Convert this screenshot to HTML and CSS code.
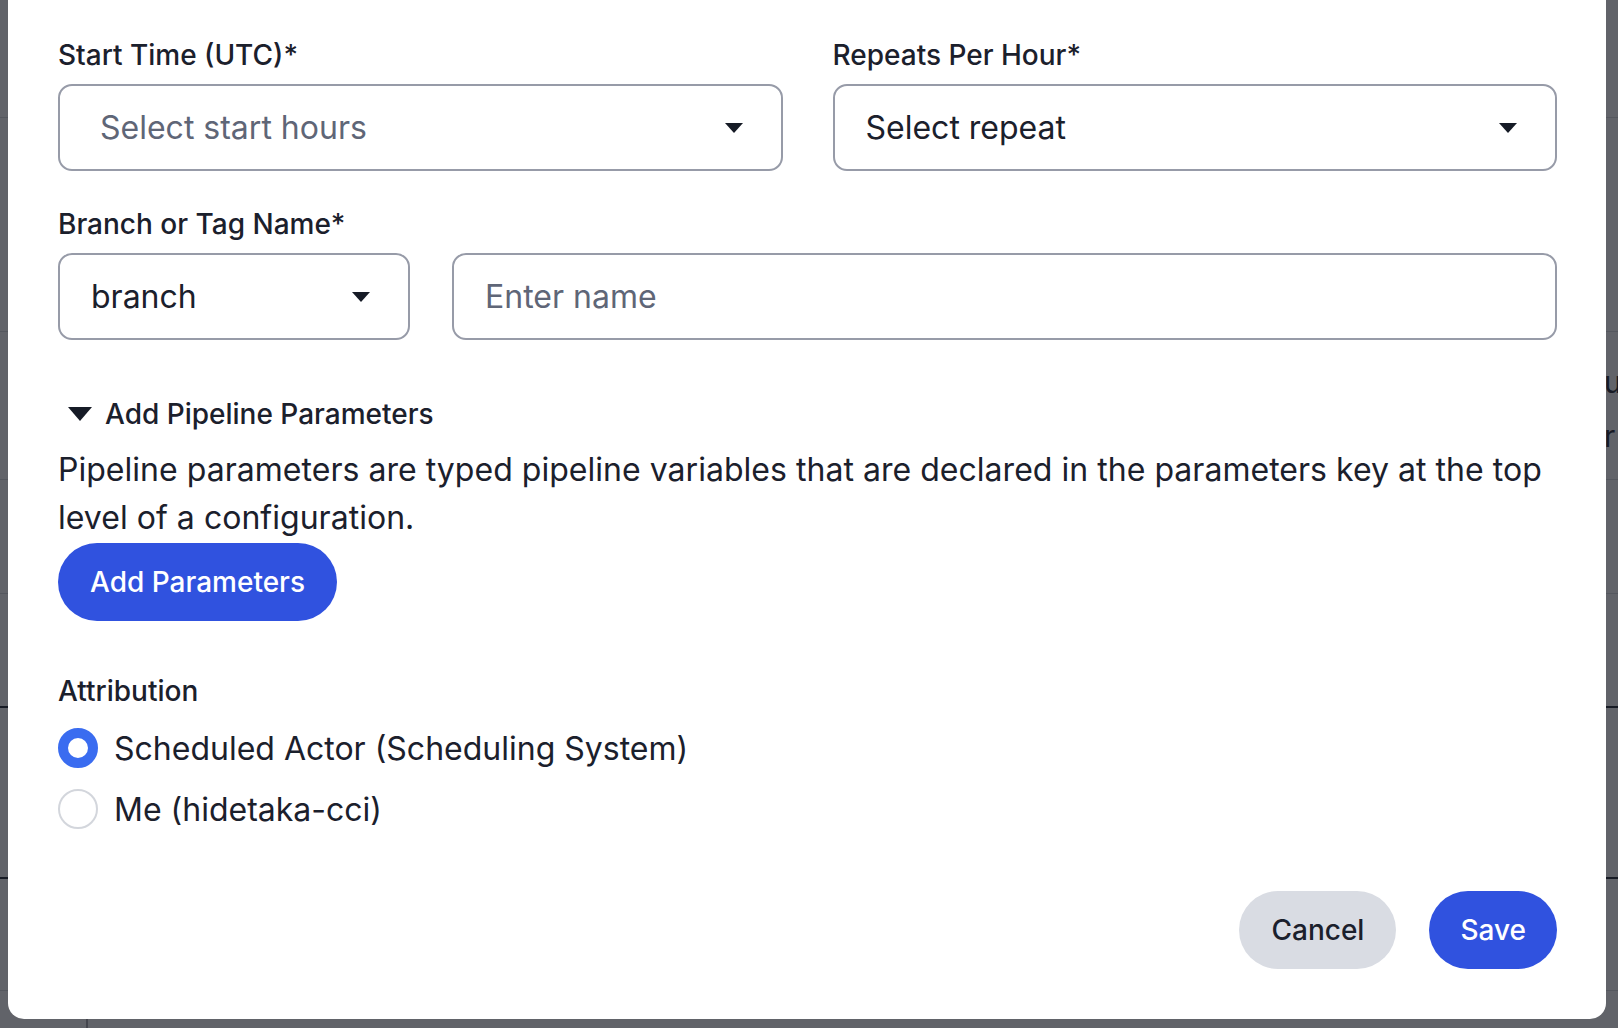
FILE: index.html
```html
<!DOCTYPE html>
<html lang="en">
<head>
    <meta charset="UTF-8">
    <meta name="viewport" content="width=device-width, initial-scale=1.0">
    <title>Edit Schedule</title>
    <link rel="stylesheet" href="styles.css">
</head>
<body>
    <!-- page underneath the dialog -->
    <div class="page">
        <div class="page-row head">&nbsp;</div>
        <div class="page-row tall">&nbsp;</div>
        <div class="page-row text-row"><span class="cell">u</span><span class="cell">r</span></div>
        <div class="page-row short">&nbsp;</div>
        <div class="page-row short dark">&nbsp;</div>
        <div class="page-row mid dark">&nbsp;</div>
        <div class="page-row">&nbsp;</div>
    </div>
    <div class="page-footer"><span class="footer-sep"></span></div>

    <div class="overlay"></div>

    <div class="modal">
        <form class="form" onsubmit="return false">
            <div class="row two-col">
                <div class="field">
                    <label class="label">Start Time (UTC)*</label>
                    <div class="select select-multi">
                        <span class="placeholder">Select start hours</span>
                        <span class="caret"></span>
                    </div>
                </div>
                <div class="field">
                    <label class="label">Repeats Per Hour*</label>
                    <div class="select">
                        <span class="value">Select repeat</span>
                        <span class="caret"></span>
                    </div>
                </div>
            </div>

            <div class="field branch-field">
                <label class="label">Branch or Tag Name*</label>
                <div class="row branch-row">
                    <div class="select">
                        <span class="value">branch</span>
                        <span class="caret"></span>
                    </div>
                    <input class="input" type="text" placeholder="Enter name">
                </div>
            </div>

            <div class="params">
                <div class="params-toggle">
                    <span class="toggle-caret"></span>
                    <span>Add Pipeline Parameters</span>
                </div>
                <p class="params-text">Pipeline parameters are typed pipeline variables that are declared in the parameters key at the top level of a configuration.</p>
                <button type="button" class="btn btn-primary">Add Parameters</button>
            </div>

            <div class="attribution">
                <div class="label">Attribution</div>
                <label class="radio">
                    <input type="radio" name="actor" checked>
                    <span class="radio-dot"></span>
                    <span>Scheduled Actor (Scheduling System)</span>
                </label>
                <label class="radio">
                    <input type="radio" name="actor">
                    <span class="radio-dot"></span>
                    <span>Me (hidetaka-cci)</span>
                </label>
            </div>

            <div class="actions">
                <button type="button" class="btn btn-secondary">Cancel</button>
                <button type="submit" class="btn btn-primary btn-save">Save</button>
            </div>
        </form>
    </div>
</body>
</html>
```

FILE: styles.css
```css
* {
    box-sizing: border-box;
}
body {
    margin: 0;
    height: 100vh;
    overflow: hidden;
    font-family: Inter, "Noto Sans", sans-serif;
    color: #1b202c;
    background: #ffffff;
}

/* page behind the dialog */
.page {
    display: flex;
    flex-direction: column;
}
.page-row {
    height: 112px;
    border-bottom: 1px solid #d6d8dd;
    padding-left: 1604px;
    font-size: 30px;
    white-space: nowrap;
}
.page-row.head {
    height: 118px;
}
.page-row.tall {
    height: 214px;
}
.page-row.text-row {
    height: 148px;
    padding-top: 23px;
    display: flex;
    flex-direction: column;
    line-height: 54px;
}
.page-row.short {
    height: 114px;
}
.page-row.mid {
    height: 171px;
}
.page-row.dark {
    border-bottom: 2px solid #1b202c;
}
.page-footer {
    height: 60px;
}
.footer-sep {
    display: block;
    margin-left: 86px;
    width: 2px;
    height: 100%;
    background: #1b202c;
    opacity: 0.4;
}

.overlay {
    position: fixed;
    inset: 0;
    background: rgba(22, 25, 34, 0.68);
}

/* dialog */
.modal {
    position: fixed;
    top: 0;
    left: 8px;
    width: 1598px;
    height: 1019px;
    background: #ffffff;
    border-radius: 0 0 16px 16px;
    padding: 35px 49px 50px 50px;
}
.form {
    height: 100%;
    display: flex;
    flex-direction: column;
}
.row {
    display: grid;
}
.two-col {
    grid-template-columns: 1fr 1fr;
    gap: 50px;
}
.field {
    display: flex;
    flex-direction: column;
}
.label {
    font-size: 28px;
    line-height: 40px;
    font-weight: 500;
    margin-bottom: 9px;
    color: #1b202c;
}

.select,
.input {
    height: 87px;
    border: 2px solid #979ba8;
    border-radius: 14px;
    background: #ffffff;
    font-family: inherit;
    font-size: 32px;
    color: #1b202c;
}
.select {
    display: flex;
    align-items: center;
    justify-content: space-between;
    padding: 0 38px 0 31px;
}
.select-multi {
    padding-left: 40px;
}
.placeholder,
.input::placeholder {
    color: #5f6677;
}
.caret {
    width: 0;
    height: 0;
    border-left: 9px solid transparent;
    border-right: 9px solid transparent;
    border-top: 10px solid #161b26;
}
.input {
    padding: 0 31px;
    outline: none;
}

.branch-field {
    margin-top: 33px;
}
.branch-row {
    grid-template-columns: 352px 1fr;
    gap: 42px;
}

/* pipeline parameters */
.params {
    margin-top: 54px;
}
.params-toggle {
    display: flex;
    align-items: center;
    gap: 13px;
    padding-left: 10px;
    font-size: 28px;
    line-height: 40px;
    font-weight: 500;
}
.toggle-caret {
    width: 0;
    height: 0;
    border-left: 12px solid transparent;
    border-right: 12px solid transparent;
    border-top: 14px solid #161b26;
}
.params-text {
    margin: 12px 0 1px;
    font-size: 32px;
    line-height: 48px;
    letter-spacing: 0.03px;
}

.btn {
    height: 78px;
    padding: 0 32px;
    border: none;
    border-radius: 39px;
    font-family: inherit;
    font-size: 28px;
    font-weight: 500;
    cursor: pointer;
}
.btn-primary {
    background: #3052df;
    color: #ffffff;
}
.btn-save {
    padding: 0 31px;
}
.btn-secondary {
    background: #d9dce3;
    color: #1b202c;
}

/* attribution */
.attribution {
    margin-top: 50px;
    display: flex;
    flex-direction: column;
}
.attribution .label {
    margin-bottom: 13px;
}
.radio {
    display: flex;
    align-items: center;
    gap: 16px;
    height: 48px;
    margin-bottom: 13px;
    font-size: 32px;
    cursor: pointer;
}
.radio input {
    display: none;
}
.radio-dot {
    width: 40px;
    height: 40px;
    border-radius: 50%;
    border: 2px solid #d3d6dc;
    background: #ffffff;
}
.radio input:checked + .radio-dot {
    border: 10px solid #3a6cf0;
}

.actions {
    margin-top: auto;
    display: flex;
    justify-content: flex-end;
    gap: 33px;
}
```
